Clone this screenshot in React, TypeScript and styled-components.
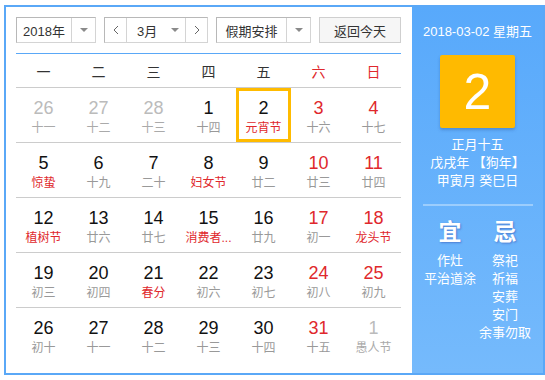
import styled, { createGlobalStyle } from 'styled-components';

const GlobalStyle = createGlobalStyle`
  body {
    margin: 0;
    font-family: "Liberation Sans", Arial, "Noto Sans CJK SC", sans-serif;
    color: #333;
  }
`;

const Calendar = styled.div`
  margin: 5px 0 0 4px;
  width: 541px;
  height: 370px;
  box-sizing: border-box;
  border: 2px solid #5aa8f7;
  display: flex;
  background: #fff;
`;

const Main = styled.div`
  width: 406px;
  padding: 10px 0 0 10px;
  box-sizing: border-box;
`;

const Toolbar = styled.div`
  display: flex;
  gap: 8px;
  height: 26px;
  font-size: 13px;
`;

const Select = styled.div<{ $w: number }>`
  width: ${(p) => p.$w}px;
  height: 26px;
  box-sizing: border-box;
  border: 1px solid #b8b8b8;
  border-right-color: #d4d4d4;
  border-bottom-color: #d4d4d4;
  display: flex;
  align-items: stretch;
  background: #fff;
`;

const SelectText = styled.div`
  flex: 1;
  display: flex;
  align-items: center;
  justify-content: center;
  color: #333;
`;

const ArrowBox = styled.div`
  width: 23px;
  border-left: 1px solid #d4d4d4;
  display: flex;
  align-items: center;
  justify-content: center;
`;

const Caret = styled.span`
  width: 0;
  height: 0;
  border-left: 4px solid transparent;
  border-right: 4px solid transparent;
  border-top: 4px solid #8a8a8a;
`;

const NavBtn = styled.div<{ $side: 'left' | 'right' }>`
  width: 21px;
  display: flex;
  align-items: center;
  justify-content: center;
  ${(p) => (p.$side === 'left' ? 'border-right' : 'border-left')}: 1px solid #d4d4d4;
`;

const MonthText = styled.div`
  flex: 1;
  display: flex;
  align-items: center;
  padding-left: 10px;
  gap: 14px;
`;

const TodayBtn = styled.div`
  width: 82px;
  height: 26px;
  box-sizing: border-box;
  border: 1px solid #cfcfcf;
  background: #f6f6f6;
  display: flex;
  align-items: center;
  justify-content: center;
  color: #333;
`;

const Grid = styled.div`
  margin-top: 10px;
  width: 385px;
  border-top: 1px solid #5aa8f7;
`;

const Row = styled.div<{ $h: number; $line?: boolean }>`
  display: grid;
  grid-template-columns: repeat(7, 55px);
  height: ${(p) => p.$h}px;
  box-sizing: border-box;
  border-bottom: ${(p) => (p.$line ? '1px solid #cccccc' : 'none')};
`;

const WeekDay = styled.div<{ $red?: boolean }>`
  display: flex;
  align-items: center;
  justify-content: center;
  font-size: 14px;
  color: ${(p) => (p.$red ? '#e0282c' : '#333')};
`;

const Cell = styled.div<{ $sel?: boolean }>`
  box-sizing: border-box;
  display: flex;
  flex-direction: column;
  align-items: center;
  padding-top: ${(p) => (p.$sel ? '5px' : '8px')};
  border: ${(p) => (p.$sel ? '3px solid #ffbb00' : 'none')};
`;

const Num = styled.div<{ $c: string }>`
  font-size: 18px;
  line-height: 24px;
  color: ${(p) => p.$c};
`;

const Lunar = styled.div<{ $c: string }>`
  font-size: 12px;
  line-height: 16px;
  color: ${(p) => p.$c};
  white-space: nowrap;
`;

const Side = styled.div`
  flex: 1;
  background: linear-gradient(#58a9fb, #75bafc);
  color: #fff;
  display: flex;
  flex-direction: column;
  align-items: center;
  padding-top: 16px;
`;

const DateLine = styled.div`
  font-size: 13px;
  line-height: 18px;
`;

const BigDay = styled.div`
  margin-top: 14px;
  width: 75px;
  height: 73px;
  background: #ffba00;
  border-radius: 2px;
  box-shadow: 0 2px 3px rgba(40, 80, 140, 0.35);
  display: flex;
  align-items: center;
  justify-content: center;
  font-size: 50px;
  color: #fff;
`;

const Info = styled.div`
  margin-top: 8px;
  font-size: 13px;
  line-height: 18px;
  text-align: center;
`;

const Divider = styled.div`
  margin-top: 14px;
  width: 110px;
  height: 2px;
  background: rgba(255, 255, 255, 0.35);
`;

const Advice = styled.div`
  margin-top: 12px;
  display: grid;
  grid-template-columns: 55px 55px;
  text-align: center;
`;

const AdviceTitle = styled.div`
  font-size: 23px;
  line-height: 28px;
  font-weight: bold;
  text-shadow: 1px 1px 2px rgba(40, 60, 160, 0.45);
`;

const AdviceList = styled.div`
  margin-top: 6px;
  font-size: 13px;
  line-height: 18px;
  white-space: nowrap;
`;

const Chevron = ({ dir }: { dir: 'l' | 'r' }) => (
  <svg width="6" height="10" viewBox="0 0 6 10">
    <polyline
      points={dir === 'l' ? '5,1 1,5 5,9' : '1,1 5,5 1,9'}
      fill="none"
      stroke="#666"
      strokeWidth="1"
    />
  </svg>
);

type Day = { d: number; l: string; other?: boolean; fest?: boolean; sel?: boolean };

const weeks: Day[][] = [
  [
    { d: 26, l: '十一', other: true },
    { d: 27, l: '十二', other: true },
    { d: 28, l: '十三', other: true },
    { d: 1, l: '十四' },
    { d: 2, l: '元宵节', fest: true, sel: true },
    { d: 3, l: '十六' },
    { d: 4, l: '十七' },
  ],
  [
    { d: 5, l: '惊蛰', fest: true },
    { d: 6, l: '十九' },
    { d: 7, l: '二十' },
    { d: 8, l: '妇女节', fest: true },
    { d: 9, l: '廿二' },
    { d: 10, l: '廿三' },
    { d: 11, l: '廿四' },
  ],
  [
    { d: 12, l: '植树节', fest: true },
    { d: 13, l: '廿六' },
    { d: 14, l: '廿七' },
    { d: 15, l: '消费者...', fest: true },
    { d: 16, l: '廿九' },
    { d: 17, l: '初一' },
    { d: 18, l: '龙头节', fest: true },
  ],
  [
    { d: 19, l: '初三' },
    { d: 20, l: '初四' },
    { d: 21, l: '春分', fest: true },
    { d: 22, l: '初六' },
    { d: 23, l: '初七' },
    { d: 24, l: '初八' },
    { d: 25, l: '初九' },
  ],
  [
    { d: 26, l: '初十' },
    { d: 27, l: '十一' },
    { d: 28, l: '十二' },
    { d: 29, l: '十三' },
    { d: 30, l: '十四' },
    { d: 31, l: '十五' },
    { d: 1, l: '愚人节', other: true },
  ],
];

const weekNames = ['一', '二', '三', '四', '五', '六', '日'];
const RED = '#e0282c';

const App = () => {
  return (
    <>
      <GlobalStyle />
      <Calendar>
        <Main>
          <Toolbar>
            <Select $w={80}>
              <SelectText>2018年</SelectText>
              <ArrowBox>
                <Caret />
              </ArrowBox>
            </Select>
            <Select $w={104}>
              <NavBtn $side="left">
                <Chevron dir="l" />
              </NavBtn>
              <MonthText>
                3月
                <Caret />
              </MonthText>
              <NavBtn $side="right">
                <Chevron dir="r" />
              </NavBtn>
            </Select>
            <Select $w={95}>
              <SelectText>假期安排</SelectText>
              <ArrowBox>
                <Caret />
              </ArrowBox>
            </Select>
            <TodayBtn>返回今天</TodayBtn>
          </Toolbar>
          <Grid>
            <Row $h={34} $line>
              {weekNames.map((n, i) => (
                <WeekDay key={n} $red={i > 4}>
                  {n}
                </WeekDay>
              ))}
            </Row>
            {weeks.map((w, wi) => (
              <Row key={wi} $h={55} $line={wi < weeks.length - 1}>
                {w.map((day, i) => {
                  const numColor = day.other ? '#bbbbbb' : i > 4 ? RED : '#111';
                  const lunarColor = day.other
                    ? day.fest
                      ? '#bbbbbb'
                      : '#aaaaaa'
                    : day.fest
                      ? RED
                      : '#999999';
                  return (
                    <Cell key={i} $sel={day.sel}>
                      <Num $c={numColor}>{day.d}</Num>
                      <Lunar $c={lunarColor}>{day.l}</Lunar>
                    </Cell>
                  );
                })}
              </Row>
            ))}
          </Grid>
        </Main>
        <Side>
          <DateLine>2018-03-02 星期五</DateLine>
          <BigDay>2</BigDay>
          <Info>
            <div>正月十五</div>
            <div>戊戌年 【狗年】</div>
            <div>甲寅月 癸巳日</div>
          </Info>
          <Divider />
          <Advice>
            <AdviceTitle>宜</AdviceTitle>
            <AdviceTitle>忌</AdviceTitle>
            <AdviceList>
              <div>作灶</div>
              <div>平治道涂</div>
            </AdviceList>
            <AdviceList>
              <div>祭祀</div>
              <div>祈福</div>
              <div>安葬</div>
              <div>安门</div>
              <div>余事勿取</div>
            </AdviceList>
          </Advice>
        </Side>
      </Calendar>
    </>
  );
};

export default App;
